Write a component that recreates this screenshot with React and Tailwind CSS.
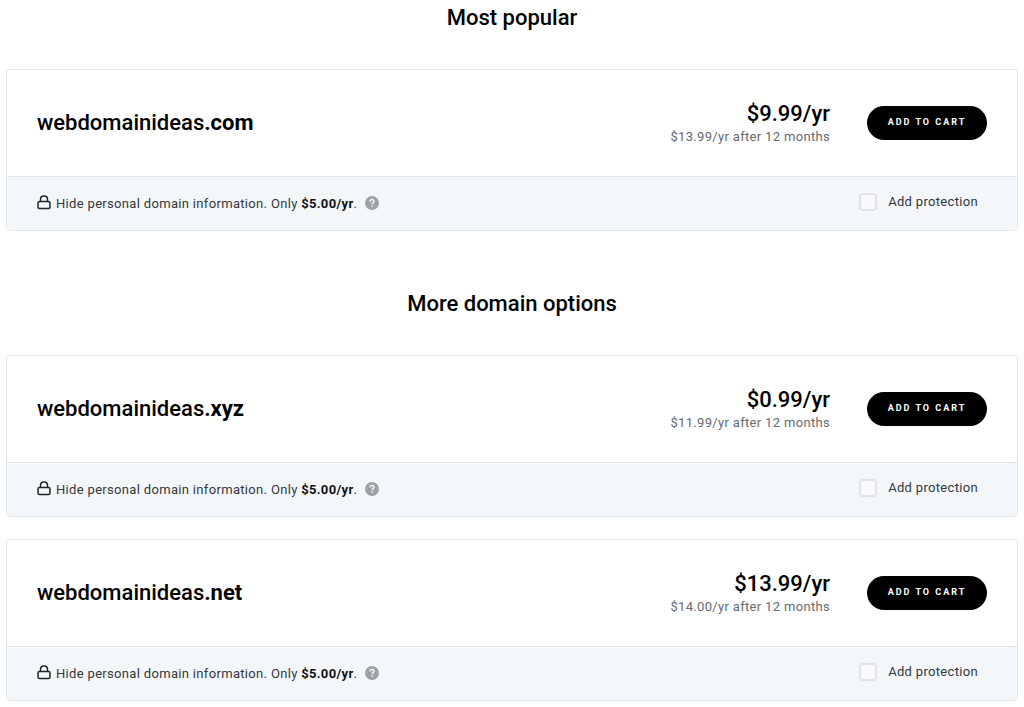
const popular = [
  { name: "webdomainideas", tld: ".com", price: "$9.99/yr", renewal: "$13.99/yr after 12 months" },
];

const others = [
  { name: "webdomainideas", tld: ".xyz", price: "$0.99/yr", renewal: "$11.99/yr after 12 months" },
  { name: "webdomainideas", tld: ".net", price: "$13.99/yr", renewal: "$14.00/yr after 12 months" },
];

function LockIcon() {
  return (
    <svg
      className="mr-[5px] mb-[2px] h-4 w-[14px] shrink-0"
      viewBox="0 0 14 16"
      fill="none"
      stroke="#20252b"
      strokeWidth="1.5"
      aria-hidden="true"
    >
      <rect x="1" y="6.5" width="12" height="7" rx="1.5" />
      <path d="M3.5 6.5V4.400A3.300 3.300 0 0 1 6.800 1.100h0.400A3.300 3.300 0 0 1 10.500 4.400V6.500" />
    </svg>
  );
}

function HelpIcon() {
  return (
    <svg className="h-[14px] w-[14px]" viewBox="0 0 14 14" fill="none" aria-hidden="true">
      <circle cx="7" cy="7" r="7" fill="#9fa2a5" />
      <path
        d="M5 5.4C5 4.2 5.8 3.5 7 3.5s2 .7 2 1.8C9 6.6 7.1 6.7 7.1 8.3"
        stroke="#f3f7fa"
        strokeWidth="1.4"
      />
      <rect x="6.3" y="9.4" width="1.5" height="1.5" fill="#f3f7fa" />
    </svg>
  );
}

function DomainCard({ domain }) {
  return (
    <article className="overflow-hidden rounded-[4px] border border-[#e4e6ea]">
      <div className="flex h-[107px] items-center border-b border-[#e2e5ea] px-[30px]">
        <h3 className="flex-1 text-[22px] leading-7 font-medium">
          {domain.name}
          <strong className="font-bold">{domain.tld}</strong>
        </h3>
        <div className="mr-[37px] pt-1 text-right">
          <p className="text-[22px] leading-6 font-medium">{domain.price}</p>
          <p className="text-[13px] leading-[22px] tracking-wide text-[#66696e]">{domain.renewal}</p>
        </div>
        <button
          type="button"
          className="h-[34px] w-[120px] rounded-full bg-black text-[9px] font-bold tracking-[2px] text-white uppercase"
        >
          Add to cart
        </button>
      </div>
      <div className="flex h-[53px] items-center justify-between bg-[#f3f7fa] pr-[39px] pl-[30px] text-[13px] tracking-wide text-[#33373c]">
        <div className="flex items-center">
          <LockIcon />
          <p>
            Hide personal domain information. Only{" "}
            <strong className="font-bold text-[#111315]">$5.00/yr</strong>.
          </p>
          <button type="button" aria-label="About domain privacy" className="mb-[2px] ml-2">
            <HelpIcon />
          </button>
        </div>
        <label className="flex items-center gap-[11px] pb-1">
          <input
            type="checkbox"
            className="h-[18px] w-[18px] appearance-none rounded-[4px] border-2 border-[#e0e3e9] bg-[#f7f9fc] checked:bg-black"
          />
          Add protection
        </label>
      </div>
    </article>
  );
}

function DomainSection({ title, domains }) {
  return (
    <section>
      <h2 className="mb-[33px] text-center text-[22px] leading-9 font-medium">{title}</h2>
      <div className="flex flex-col gap-[22px]">
        {domains.map((domain) => (
          <DomainCard key={domain.tld} domain={domain} />
        ))}
      </div>
    </section>
  );
}

export default function App() {
  return (
    <main className="flex flex-col gap-[55px] bg-white px-[6px] pb-[6px] font-[Roboto,sans-serif] text-black">
      <DomainSection title="Most popular" domains={popular} />
      <DomainSection title="More domain options" domains={others} />
    </main>
  );
}
